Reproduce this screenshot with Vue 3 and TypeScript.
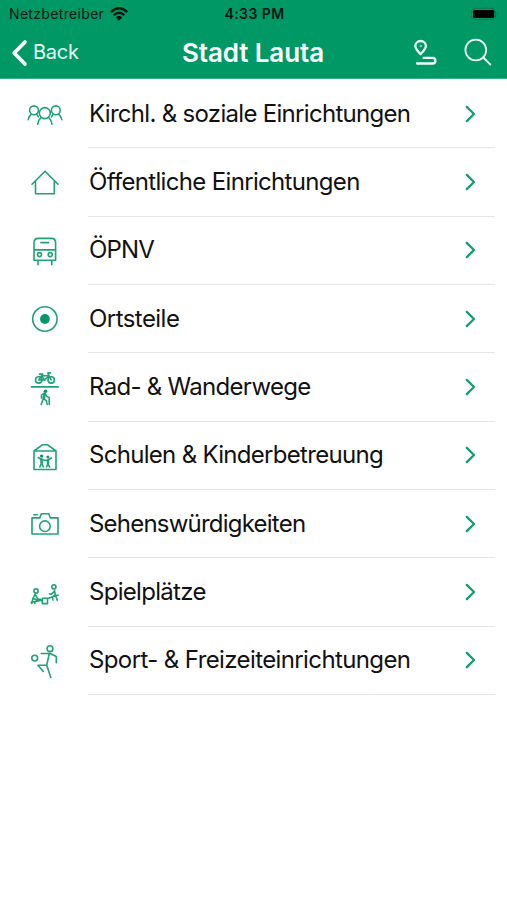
<script setup lang="ts">
interface Category {
  label: string
  icon: string
  middle: number
  spacing: string
}

const categories: Category[] = [
  { label: 'Kirchl. & soziale Einrichtungen', icon: 'people', middle: 23.2, spacing: '-0.7px' },
  { label: 'Öffentliche Einrichtungen', icon: 'house', middle: 23.5, spacing: '-0.67px' },
  { label: 'ÖPNV', icon: 'train', middle: 23.9, spacing: '-0.85px' },
  { label: 'Ortsteile', icon: 'target', middle: 24.3, spacing: '-0.55px' },
  { label: 'Rad- & Wanderwege', icon: 'trails', middle: 24.6, spacing: '-0.7px' },
  { label: 'Schulen & Kinderbetreuung', icon: 'school', middle: 23, spacing: '-0.7px' },
  { label: 'Sehenswürdigkeiten', icon: 'camera', middle: 23.3, spacing: '-0.78px' },
  { label: 'Spielplätze', icon: 'seesaw', middle: 23.7, spacing: '-0.7px' },
  { label: 'Sport- & Freizeiteinrichtungen', icon: 'sport', middle: 24, spacing: '-0.61px' },
]
</script>

<template>
  <div class="screen">
    <header class="header">
      <div class="status">
        <div class="carrier">
          <span>Netzbetreiber</span>
          <svg class="wifi" width="20" height="16" viewBox="0 0 20 16">
            <path d="M1.8 6.1 Q10 -1.5 18.2 6.1" />
            <path d="M4.7 9.1 Q10 4.2 15.3 9.1" />
            <path class="dot" d="M6.9 11.4 Q10 8.7 13.1 11.4 L10 14.7Z" />
          </svg>
        </div>
        <span class="time">4:33 PM</span>
        <svg class="battery" width="30" height="16" viewBox="0 0 30 16">
          <rect class="case" x="1.5" y="2.3" width="24" height="11.4" rx="3.4" />
          <rect class="charge" x="3" y="3.9" width="21.2" height="8.2" rx="1.6" />
          <path class="tip" d="M27 6.2 Q29 8 27 9.8Z" />
        </svg>
      </div>
      <nav class="nav">
        <button class="back" type="button">
          <svg width="18" height="28" viewBox="0 0 18 28"><path d="M15 3 L4.2 14 L15 25" /></svg>
          <span>Back</span>
        </button>
        <h1>Stadt Lauta</h1>
        <div class="actions">
          <svg width="26" height="28" viewBox="0 0 26 28">
            <path class="route" d="M8.6 15.2 Q3.3 9.8 3.3 7 A5.3 5 0 0 1 13.9 7 Q13.9 9.8 8.6 15.2Z" />
            <circle class="pin" cx="8.6" cy="7" r="0.8" />
            <path class="route" d="M11.6 18.9 H20.6 A2.8 2.8 0 0 1 20.6 24.5 H5" />
          </svg>
          <svg width="30" height="30" viewBox="0 0 30 30">
            <circle class="lens" cx="12.8" cy="12" r="10.4" />
            <path class="handle" d="M20.3 19.5 L27.4 26.6" />
          </svg>
        </div>
      </nav>
    </header>
    <ul class="list">
      <li v-for="item in categories" :key="item.label" class="row">
        <svg class="icon" width="50" height="50" :viewBox="`0 ${item.middle - 24.5} 50 50`">
          <g v-if="item.icon === 'people'">
            <circle cx="24.8" cy="22.8" r="5.5" />
            <circle cx="14" cy="20" r="4.4" />
            <circle cx="35.8" cy="20" r="4.4" />
            <path d="M21 27.3 Q18.3 29.5 17.7 34 M28.7 27.3 Q31.4 29.5 32 34 M11.4 23.8 Q9 25.4 8.2 29.3 M16.5 23.8 L18.3 26.5 M33.3 23.8 L31.5 26.5 M38.5 23.8 Q40.8 25.4 41.7 29.3" />
          </g>
          <g v-else-if="item.icon === 'house'">
            <path d="M12 25.2 L25 12.2 L38 25.2 M15.5 22 V34.7 H34.3 V22" />
          </g>
          <g v-else-if="item.icon === 'train'">
            <path d="M14 33.7 V16.2 Q14 11.8 18.4 11.8 H31.4 Q35.6 11.8 35.6 16.2 V33.7Z M14 23.3 H35.6 M20.9 16 H28.6 M18 33.7 V38.2 M31.8 33.7 V38.2" />
            <circle cx="19.5" cy="28" r="2" /><circle cx="30.2" cy="28" r="2" />
          </g>
          <g v-else-if="item.icon === 'target'">
            <circle cx="24.9" cy="24.8" r="12.2" />
            <circle class="solid" cx="24.9" cy="24.8" r="4.9" />
          </g>
          <g v-else-if="item.icon === 'trails'">
            <path d="M11.5 24 H38.2" />
            <circle cx="18.7" cy="17" r="3.2" /><circle cx="31.2" cy="17" r="3.2" />
            <path d="M18.7 17 L21.5 12.8 H29 L31.2 17 M21.5 12.8 L24.7 17.2 L29 12.8 L27.8 10 H30.5 M18.7 17 H24.7 M19.5 11.2 H22.8" />
            <circle class="solid" cx="25.5" cy="28.4" r="1.8" />
            <path d="M24.3 30.3 L21.5 32.2 V35.2 M24.4 30.5 L23.4 35.4 L21.2 41.5 M23.5 35.4 L26.4 38 L27.1 41.5 M25.1 30.5 L26.7 33.5 L29.2 34.7 V41.5" />
            <path class="thick" d="M24.6 31 L24 35" />
          </g>
          <g v-else-if="item.icon === 'school'">
            <path d="M14 18.5 H36 V37 H14Z M14 18.5 L22.3 12.3 H27.7 L36 18.5" />
            <circle class="solid" cx="21.6" cy="23.6" r="1.7" /><circle class="solid" cx="27.9" cy="24.6" r="1.5" />
            <path d="M18.2 25 L21.5 27 L25 27.7 L28 27.5 L31.3 25.5 M21.6 26.5 V30 L19.9 34.5 M21.6 30 L23.3 34.5 M28 27.5 V31 L26.5 34.5 M28 31 L29.6 34.5" />
            <path class="thick" d="M21.6 27 V29.7 M28 28 V30.5" />
          </g>
          <g v-else-if="item.icon === 'camera'">
            <path d="M12 17.7 H19.8 L21.3 13.6 H28.8 L30.3 17.7 H38 V33.8 H12Z M13.8 14.6 H17.3" />
            <circle cx="24.9" cy="26" r="5.3" />
          </g>
          <g v-else-if="item.icon === 'seesaw'">
            <circle cx="16" cy="22.2" r="2.1" /><circle cx="33.9" cy="18" r="2.1" />
            <path d="M11.2 33.5 L22.2 31.3 M27.6 29.8 L38.2 26.3 M22.3 29.4 H27.5 V34.8 H22.3Z M15 25.5 L12.9 29.7 L11.8 34.7 M15.1 25.5 L18 30.5 H20.5 M14 30 L17 31.3 L14.7 34.5 M34.5 21.3 L35.4 26.5 L37.3 31.3 M34.4 22.5 L31.2 25.5 L29.5 25 M34.5 26.5 L32.4 28.3 L33 31.2" />
          </g>
          <g v-else>
            <circle cx="30" cy="12.2" r="2.9" /><circle cx="14.7" cy="21.6" r="2.9" />
            <path d="M21.3 17 H30.2 L36.3 20 V26.2 M29.3 17 L26.7 28.8 L30.8 41 M26.7 28.8 H18 L23.3 35" />
          </g>
        </svg>
        <div class="content">
          <span class="label" :style="{ letterSpacing: item.spacing }">{{ item.label }}</span>
          <svg class="chevron" width="14" height="20" viewBox="0 0 14 20"><path d="M3.8 2.9 L11 10 L3.8 17.1" /></svg>
        </div>
      </li>
    </ul>
  </div>
</template>

<style>
body {
  background: #fff;
}
</style>

<style scoped>
.screen {
  height: 900px;
  overflow: hidden;
  background: #fff;
  color: #111;
  font-family: Inter, "Liberation Sans", sans-serif;
}
svg {
  display: block;
  flex: none;
  fill: none;
  stroke-linecap: round;
  stroke-linejoin: round;
}
.header {
  box-sizing: border-box;
  height: 79px;
  background: #009966;
  border-bottom: 1px solid #36ad84;
}
.status {
  display: grid;
  grid-template-columns: 1fr auto 1fr;
  align-items: center;
  height: 27px;
  padding: 0 7px 0 9px;
  color: #03170f;
  font-size: 14px;
}
.carrier {
  display: flex;
  align-items: center;
  gap: 5px;
  letter-spacing: 0.33px;
}
.wifi {
  stroke: #03170f;
  stroke-width: 2.4;
  stroke-linecap: butt;
}
.dot, .charge {
  fill: #000;
  stroke: none;
}
.time {
  font-weight: 600;
  letter-spacing: 0.45px;
}
.battery {
  justify-self: end;
}
.case {
  stroke: #087950;
  stroke-width: 1;
}
.tip {
  fill: #087950;
}
.nav {
  display: grid;
  grid-template-columns: 1fr auto 1fr;
  align-items: center;
  height: 51px;
  padding: 0 14px 0 10px;
  color: #fff;
}
.back {
  display: flex;
  align-items: center;
  gap: 5px;
  padding: 0;
  border: 0;
  background: none;
  color: #e5fff5;
  font: 20px Inter, sans-serif;
  letter-spacing: -0.25px;
}
.back span {
  margin-top: -1px;
}
.back svg {
  stroke: #fff;
  stroke-width: 3.7;
}
h1 {
  margin: 0 0 0 3px;
  font-size: 26px;
  font-weight: 600;
  line-height: 32px;
  letter-spacing: -0.12px;
}
.actions {
  display: flex;
  align-items: center;
  justify-content: flex-end;
  gap: 25px;
  stroke: #f0fff9;
}
.route {
  stroke-width: 2.3;
}
.pin {
  stroke-width: 0.5;
}
.lens, .handle {
  stroke-width: 1.8;
}
.list {
  margin: 0;
  padding: 1px 0 0;
  list-style: none;
}
.row {
  display: flex;
  align-items: center;
  height: 68.35px;
  padding: 0 12px 0 20px;
}
.icon {
  stroke: #20a274;
  stroke-width: 1.6;
}
.solid {
  fill: #079866;
  stroke: none;
}
.thick {
  stroke-width: 2.6;
}
.content {
  display: flex;
  align-items: center;
  justify-content: space-between;
  flex: 1;
  box-sizing: border-box;
  height: 100%;
  margin-left: 18px;
  padding: 0 18px 0 1px;
  border-bottom: 1px solid #e5e5e5;
}
.label {
  font-size: 24px;
  line-height: 30px;
  white-space: nowrap;
}
.chevron {
  stroke: #139e70;
  stroke-width: 2.3;
}
</style>
